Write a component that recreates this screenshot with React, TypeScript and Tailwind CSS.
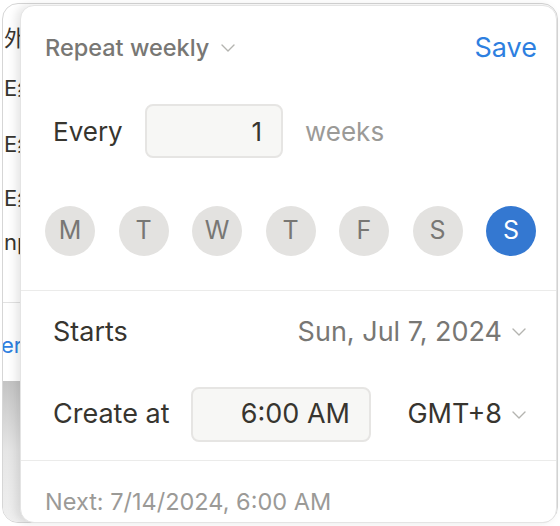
import React from 'react'

const DAYS = ['M', 'T', 'W', 'T', 'F', 'S', 'S']

function Chevron({ className }: { className?: string }) {
  return (
    <svg viewBox="0 0 14 8" className={className} fill="none" stroke="currentColor" strokeWidth="1.4" strokeLinecap="round" strokeLinejoin="round">
      <polyline points="1,1 7,7 13,1" />
    </svg>
  )
}

export default function App() {
  return (
    <div className="relative w-[560px] h-[526px] bg-white overflow-hidden font-['Inter','Noto_Sans_CJK_SC',sans-serif] text-[#37352f]">
      {/* Window behind the popover */}
      <div className="ml-[2px] mt-[3px] w-[556px] h-[520px] rounded-[16px] border border-[#d6d6d6] bg-white overflow-hidden flex flex-col">
        <div className="flex flex-col text-[22px] leading-[24px] pl-[1px] whitespace-nowrap">
          <div className="mt-[22px]">外部链接</div>
          <div className="mt-[26px]">E组任务</div>
          <div className="mt-[32px]">E组任务</div>
          <div className="mt-[30px]">E组任务</div>
          <div className="mt-[20px] -ml-[6px]">Input</div>
        </div>
        <div className="mt-[48px] border-t border-[#e2e2e2]" />
        <div className="mt-[30px] -ml-[2px] text-[22px] leading-[24px] text-[#2e7fe0]">er</div>
        <div className="mt-[24px] flex-1 bg-gradient-to-b from-[#c4c4c4] via-[#e6e6e6] to-[#efefef]" />
      </div>

      {/* Repeat popover */}
      <div className="absolute left-[20px] top-[5px] right-[3px] bottom-[3px] rounded-[14px] bg-white border border-[#e4e4e4] shadow-[-4px_0_10px_rgba(0,0,0,0.10)] flex flex-col">
        <div className="h-[84px] flex items-center justify-between pl-[24px] pr-[19px]">
          <div className="flex items-center gap-[12px] text-[#787774] text-[23.5px] font-medium">
            Repeat weekly
            <Chevron className="w-[14px] h-[8px] text-[#b4b4b0]" />
          </div>
          <span className="text-[27px] text-[#2e7fe0]">Save</span>
        </div>

        <div className="h-[82px] flex items-center pl-[32px] text-[26px]">
          <span className="w-[92px]">Every</span>
          <div className="w-[138px] h-[54px] rounded-[8px] bg-[#f7f7f5] border-2 border-[#e6e5e3] flex items-center justify-end pr-[19px]">
            1
          </div>
          <span className="ml-[22px] text-[#9b9a97]">weeks</span>
        </div>

        <div className="h-[118px] flex items-center justify-between pl-[24px] pr-[20px]">
          {DAYS.map((d, i) => (
            <div
              key={i}
              className={
                i === 6
                  ? 'w-[50px] h-[50px] rounded-full bg-[#3478d1] text-white text-[25px] flex items-center justify-center'
                  : 'w-[50px] h-[50px] rounded-full bg-[#e3e2e0] text-[#787774] text-[25px] flex items-center justify-center'
              }
            >
              {d}
            </div>
          ))}
        </div>

        <div className="border-t border-[#ebebea]" />

        <div className="h-[82px] flex items-center justify-between pl-[32px] pr-[30px] text-[27px]">
          <span>Starts</span>
          <div className="flex items-center gap-[10px] text-[#787774]">
            Sun, Jul 7, 2024
            <Chevron className="w-[14px] h-[8px] text-[#b4b4b0]" />
          </div>
        </div>

        <div className="pt-[14px] pb-[18px] flex items-center justify-between pl-[32px] pr-[30px] text-[27px]">
          <div className="flex items-center">
            <span className="w-[138px]">Create at</span>
            <div className="w-[180px] h-[55px] rounded-[8px] bg-[#f7f7f5] border-2 border-[#e6e5e3] flex items-center justify-end pr-[19px]">
              6:00 AM
            </div>
          </div>
          <div className="flex items-center gap-[10px]">
            GMT+8
            <Chevron className="w-[14px] h-[8px] text-[#b4b4b0]" />
          </div>
        </div>

        <div className="border-t border-[#ebebea]" />

        <div className="pt-[27px] pl-[24px] text-[23.5px] leading-[28px] text-[#9b9a97]">
          Next: 7/14/2024, 6:00 AM
        </div>
      </div>
    </div>
  )
}
